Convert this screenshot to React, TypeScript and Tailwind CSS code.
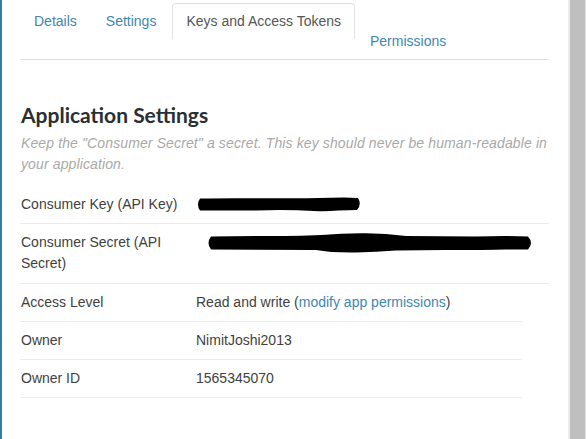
import React from "react";

function Blob1() {
  return (
    <svg width="166" height="15" viewBox="0 0 166 15" className="block">
      <path
        d="M4 1.5 Q0 7.5 4 13.5 L60 13.5 Q90 12.5 118 14 Q130 14.8 142 13.5 L161 13 Q166 7.5 162 1 Q150 0 135 0.8 Q118 1.5 100 1.2 L40 1.2 Q20 1.2 4 1.5Z"
        fill="#000"
      />
    </svg>
  );
}

function Blob2() {
  return (
    <svg width="328" height="20" viewBox="0 0 328 20" className="block">
      <path
        d="M5 3.5 Q0 10 5 16.5 L110 17 Q125 19.8 150 19.5 Q170 19 190 17.5 L240 17 Q280 17 300 16.5 L322 16.5 Q328 10 322 3.5 Q300 2.5 270 3.5 L200 3 Q180 0.5 160 0.2 Q135 0 120 1.8 Q100 3 60 3 Q30 3 5 3.5Z"
        fill="#000"
      />
    </svg>
  );
}

function Row({
  label,
  children,
  wide,
  tall,
}: {
  label: string;
  children: React.ReactNode;
  wide?: boolean;
  tall?: boolean;
}) {
  return (
    <div
      className={`flex border-b border-[#ebebeb] pt-[8px] leading-[21px] ${
        tall ? "pb-[9px]" : "pb-[8px]"
      } ${wide ? "w-[529px]" : "w-[502px]"}`}
    >
      <div className="w-[176px] shrink-0 pl-px pr-[10px] text-[#3f3f3f]">{label}</div>
      <div className="flex-1 text-[#3f3f3f]">{children}</div>
    </div>
  );
}

export default function App() {
  return (
    <div
      className="flex h-[439px] w-[586px] overflow-hidden bg-white text-[14px]"
      style={{ fontFamily: '"Liberation Sans", Arial, sans-serif' }}
    >
      <div className="w-[2px] shrink-0 bg-[#2f7fa3]" />
      <div className="w-[566px] shrink-0 pl-[18px]">
        <div className="w-[529px]">
          <ul className="mt-[3px] flex h-[57px] items-start border-b border-[#e0e0e0]">
            <li className="px-[14px] py-[8px] leading-5 text-[#3d87b3]">Details</li>
            <li className="ml-px px-[14px] py-[8px] leading-5 text-[#3d87b3]">Settings</li>
            <li className="ml-[2px] rounded-t-[4px] border border-b-0 border-[#e2e2e2] px-[13px] pt-[7px] pb-[8px] leading-5 text-[#555]">
              Keys and Access Tokens
            </li>
            <li className="mt-[20px] ml-px px-[14px] py-[8px] leading-5 text-[#3d87b3]">Permissions</li>
          </ul>

          <h2
            className="mt-[40px] pl-px text-[21px] font-bold leading-[29px] text-[#292f33]"
            style={{ fontFamily: "Lato, sans-serif" }}
          >
            Application Settings
          </h2>
          <p className="mt-[4px] pl-px italic leading-[21px] tracking-[0.12px] text-[#a9a9a9]">
            Keep the "Consumer Secret" a secret. This key should never be human-readable in your
            application.
          </p>

          <div className="mt-[11px]">
            <Row label="Consumer Key (API Key)" wide>
              <div className="mt-[3px] h-[18px]">
                <Blob1 />
              </div>
            </Row>
            <Row label="Consumer Secret (API Secret)" wide tall>
              <div className="ml-[10px] mt-[1px]">
                <Blob2 />
              </div>
            </Row>
            <Row label="Access Level">
              Read and write (<span className="text-[#3d87b3]">modify app permissions</span>)
            </Row>
            <Row label="Owner">NimitJoshi2013</Row>
            <Row label="Owner ID">1565345070</Row>
          </div>
        </div>
      </div>
      <div className="w-[2px] shrink-0 bg-[#ececec]" />
      <div className="w-[15px] shrink-0 bg-[#bfbfbf]" />
      <div className="w-px shrink-0 bg-[#e4e4e4]" />
    </div>
  );
}
